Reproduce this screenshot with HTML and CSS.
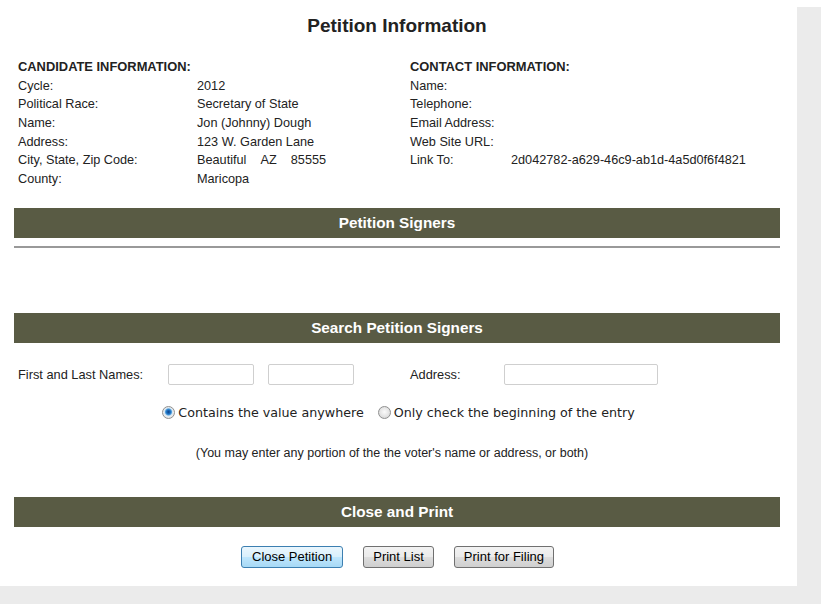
FILE: index.html
```html
<!DOCTYPE html>
<html lang="en">
<head>
    <meta charset="UTF-8">
    <title>Petition Information</title>
    <link rel="stylesheet" href="styles.css">
</head>
<body>
<div class="page">
    <h1 class="page-title">Petition Information</h1>

    <!-- Candidate / contact details -->
    <div class="info">
        <div class="info-col info-candidate">
            <div class="info-head">CANDIDATE INFORMATION:</div>
            <span>Cycle:</span><span>2012</span>
            <span>Political Race:</span><span>Secretary of State</span>
            <span>Name:</span><span>Jon (Johnny) Dough</span>
            <span>Address:</span><span>123 W. Garden Lane</span>
            <span>City, State, Zip Code:</span><span>Beautiful&nbsp;&nbsp;&nbsp;&nbsp;AZ&nbsp;&nbsp;&nbsp;&nbsp;85555</span>
            <span>County:</span><span>Maricopa</span>
        </div>
        <div class="info-col info-contact">
            <div class="info-head">CONTACT INFORMATION:</div>
            <span>Name:</span><span></span>
            <span>Telephone:</span><span></span>
            <span>Email Address:</span><span></span>
            <span>Web Site URL:</span><span></span>
            <span>Link To:</span><span>2d042782-a629-46c9-ab1d-4a5d0f6f4821</span>
        </div>
    </div>

    <div class="section-bar bar-signers">Petition Signers</div>
    <div class="signers-rule"></div>

    <div class="section-bar bar-search">Search Petition Signers</div>

    <div class="search-row">
        <label class="field-label">First and Last Names:</label>
        <input type="text" class="text-input">
        <input type="text" class="text-input">
        <label class="field-label">Address:</label>
        <input type="text" class="text-input address-input">
    </div>

    <div class="radio-row">
        <label class="radio-option"><input type="radio" name="match" class="radio" checked> Contains the value anywhere</label>
        <label class="radio-option"><input type="radio" name="match" class="radio"> Only check the beginning of the entry</label>
    </div>

    <div class="search-note">(You may enter any portion of the the voter's name or address, or both)</div>

    <div class="section-bar bar-close">Close and Print</div>

    <div class="button-row">
        <button class="btn btn-active">Close Petition</button>
        <button class="btn">Print List</button>
        <button class="btn">Print for Filing</button>
    </div>
</div>
</body>
</html>
```

FILE: styles.css
```css
/* General Styles */
body {
    margin: 0;
    padding: 0;
    font-family: "Liberation Sans", Arial, sans-serif;
    color: #222;
    background: linear-gradient(#ffffff 7px, #ebebeb 7px);
    min-height: 604px;
}

.page {
    width: 766px;
    padding: 0 17px 18px 14px;
    background-color: #ffffff;
}

.page-title {
    margin: 0;
    padding-top: 14px;
    font-size: 19px;
    line-height: 24px;
    text-align: center;
    color: #222;
}

/* Info columns */
.info {
    display: flex;
    align-items: flex-start;
    margin-top: 20px;
    padding-left: 4px;
    font-size: 12.7px;
    line-height: 18.67px;
}

.info-col {
    display: grid;
    align-content: start;
}

.info-candidate {
    width: 392px;
    grid-template-columns: 179px 1fr;
}

.info-contact {
    grid-template-columns: 101px 1fr;
}

.info-head {
    grid-column: 1 / 3;
    font-weight: bold;
    font-size: 12.9px;
}

/* Section bars */
.section-bar {
    height: 30px;
    line-height: 30px;
    background-color: #595b44;
    color: #ffffff;
    font-weight: bold;
    font-size: 15.3px;
    text-align: center;
}

.bar-signers {
    margin-top: 19px;
}

.signers-rule {
    height: 2px;
    margin-top: 8px;
    background-color: #999999;
}

.bar-search {
    margin-top: 65px;
}

/* Search form */
.search-row {
    display: grid;
    grid-template-columns: 150px 100px 142px 94px 154px;
    align-items: center;
    margin-top: 21px;
    padding-left: 4px;
    font-size: 12.8px;
}

.text-input {
    box-sizing: border-box;
    width: 86px;
    height: 21px;
    margin: 0;
    border: 1px solid #cfcfcf;
    border-radius: 2px;
    background: #fff;
}

.address-input {
    width: 154px;
}

.radio-row {
    display: flex;
    justify-content: center;
    gap: 14px;
    margin-top: 20px;
    padding-left: 3px;
    font-family: "DejaVu Sans", Verdana, sans-serif;
    font-size: 12.7px;
    line-height: 16px;
    color: #222;
}

.radio-option {
    display: flex;
    align-items: center;
    gap: 3px;
}

.radio {
    appearance: none;
    -webkit-appearance: none;
    box-sizing: border-box;
    width: 13px;
    height: 13px;
    margin: 0;
    border: 1px solid #8f9090;
    border-radius: 50%;
    background: radial-gradient(circle at 50% 45%, #fbfbfb 0, #e4e4e4 55%, #cdcdcd 100%);
}

.radio:checked {
    background: radial-gradient(circle at 50% 45%, #0b3f86 0, #1b6fc0 2px, #4b9ad8 3px, #d2e5f4 4px, #ececec 5px, #cfcfcf 100%);
}

.search-note {
    margin-top: 24px;
    padding-right: 10px;
    font-size: 12.5px;
    line-height: 16px;
    text-align: center;
}

.bar-close {
    margin-top: 36px;
}

/* Buttons */
.button-row {
    display: flex;
    justify-content: center;
    gap: 20px;
    margin-top: 19px;
    padding-left: 1px;
}

.btn {
    box-sizing: border-box;
    height: 22px;
    padding: 0 9px;
    border: 1px solid #707070;
    border-radius: 3px;
    background: linear-gradient(#f2f2f2 0%, #ebebeb 48%, #dddddd 52%, #cfcfcf 100%);
    font-family: "Liberation Sans", Arial, sans-serif;
    font-size: 13px;
    color: #000;
    cursor: pointer;
}

.btn-active {
    padding: 0 10px;
    border-color: #3c7fb1;
    background: linear-gradient(#eaf6fd 0%, #d9f0fc 48%, #bee6fd 52%, #a7d9f5 100%);
}
```
